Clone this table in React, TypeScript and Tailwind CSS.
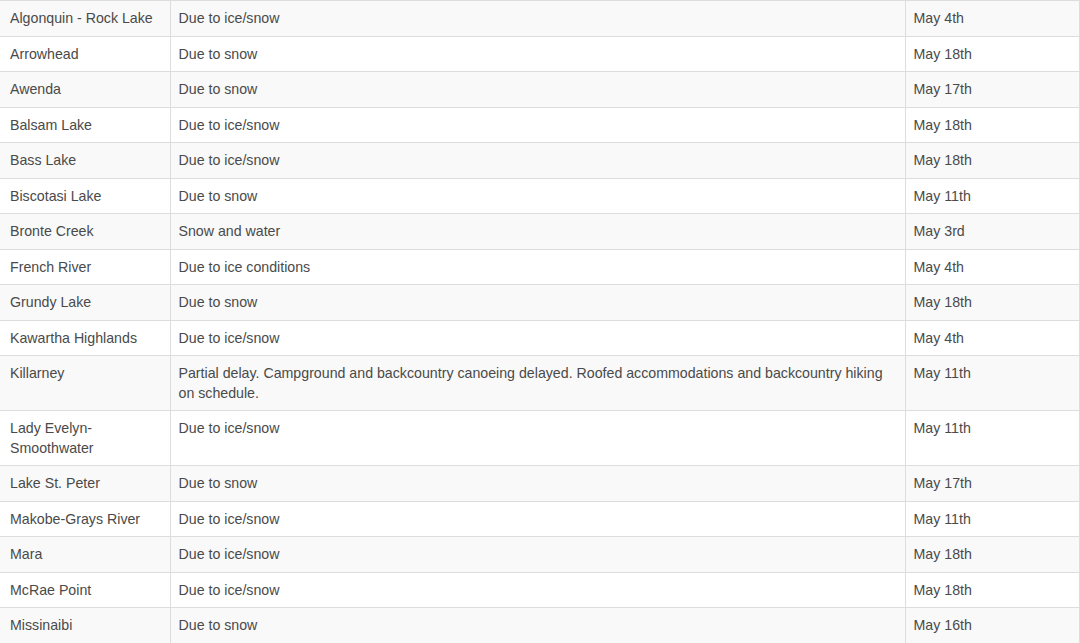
import React from 'react';

type Row = { park: string; reason: string; date: string };

const rows: Row[] = [
  { park: 'Algonquin - Rock Lake', reason: 'Due to ice/snow', date: 'May 4th' },
  { park: 'Arrowhead', reason: 'Due to snow', date: 'May 18th' },
  { park: 'Awenda', reason: 'Due to snow', date: 'May 17th' },
  { park: 'Balsam Lake', reason: 'Due to ice/snow', date: 'May 18th' },
  { park: 'Bass Lake', reason: 'Due to ice/snow', date: 'May 18th' },
  { park: 'Biscotasi Lake', reason: 'Due to snow', date: 'May 11th' },
  { park: 'Bronte Creek', reason: 'Snow and water', date: 'May 3rd' },
  { park: 'French River', reason: 'Due to ice conditions', date: 'May 4th' },
  { park: 'Grundy Lake', reason: 'Due to snow', date: 'May 18th' },
  { park: 'Kawartha Highlands', reason: 'Due to ice/snow', date: 'May 4th' },
  {
    park: 'Killarney',
    reason:
      'Partial delay. Campground and backcountry canoeing delayed. Roofed accommodations and backcountry hiking on schedule.',
    date: 'May 11th',
  },
  { park: 'Lady Evelyn-Smoothwater', reason: 'Due to ice/snow', date: 'May 11th' },
  { park: 'Lake St. Peter', reason: 'Due to snow', date: 'May 17th' },
  { park: 'Makobe-Grays River', reason: 'Due to ice/snow', date: 'May 11th' },
  { park: 'Mara', reason: 'Due to ice/snow', date: 'May 18th' },
  { park: 'McRae Point', reason: 'Due to ice/snow', date: 'May 18th' },
  { park: 'Missinaibi', reason: 'Due to snow', date: 'May 16th' },
];

export default function App() {
  return (
    <div className="w-[1080px] h-[643px] overflow-hidden bg-white font-['Liberation_Sans',Arial,sans-serif] text-[14.2px] leading-[19.5px] text-[#4a4a4a]">
      {/* Park opening delays */}
      <table className="w-[1079px] table-fixed border-collapse border-r border-[#dddddd]">
        <colgroup>
          <col className="w-[170px]" />
          <col className="w-[735px]" />
          <col className="w-[174px]" />
        </colgroup>
        <tbody>
          {rows.map((row, i) => (
            <tr key={row.park} className={i % 2 === 0 ? 'bg-[#f9f9f9]' : 'bg-white'}>
              <td className="border-t border-[#dddddd] pl-[10px] pr-[8px] pt-[8px] pb-[7px] align-top">{row.park}</td>
              <td className="border-t border-l border-[#dddddd] px-[8px] pt-[8px] pb-[7px] align-top">{row.reason}</td>
              <td className="border-t border-l border-[#dddddd] px-[8px] pt-[8px] pb-[7px] align-top">{row.date}</td>
            </tr>
          ))}
        </tbody>
      </table>
    </div>
  );
}
